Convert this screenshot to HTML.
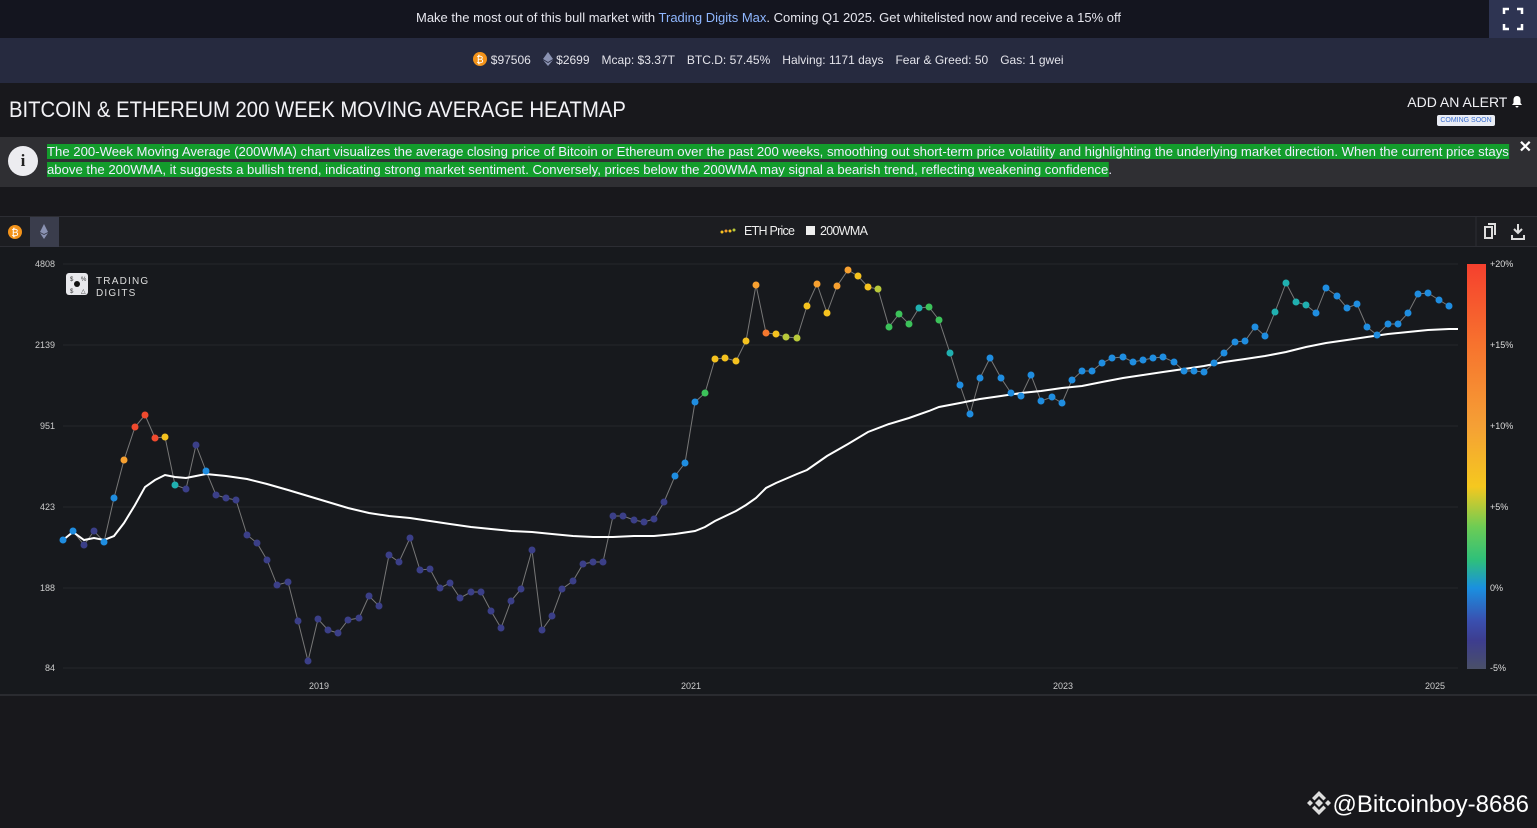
<!DOCTYPE html><html><head><meta charset="utf-8"><style>
*{margin:0;padding:0;box-sizing:border-box}
body{width:1537px;height:828px;background:#18181c;font-family:"Liberation Sans",sans-serif;color:#e8e8ee;overflow:hidden;position:relative}
.top{position:absolute;left:0;top:0;width:1537px;height:38px;background:#14151f;font-size:13px;text-align:center;line-height:36px;color:#e6e6ee}
.top b{font-weight:normal;color:#8fb7ff}
.fs{position:absolute;right:0;top:0;width:48px;height:38px;background:#2e3452}
.stats{position:absolute;left:0;top:38px;width:1537px;height:45px;background:#262a3f;font-size:12px;line-height:44px;text-align:center;color:#e3e3ea}
.stats span{margin:0 6px}
h1{position:absolute;left:9px;top:97px;font-weight:normal;font-size:22px;color:#f2f2f6;white-space:nowrap;transform:scaleX(.922);transform-origin:0 0}
.alert{position:absolute;right:14px;top:94px;font-size:14px;color:#f0f0f4}
.soon{position:absolute;left:1437px;top:115px;width:58px;height:11px;background:#e9ecf4;border-radius:2px;font-size:7px;color:#3b6fd0;text-align:center;line-height:11px}
.info{position:absolute;left:0;top:137px;width:1537px;height:50px;background:#2f2f33}
.info .i{position:absolute;left:8px;top:9px;width:30px;height:30px;border-radius:50%;background:#ececf0;color:#222;font:bold 17px "Liberation Serif",serif;text-align:center;line-height:30px}
.info p{position:absolute;left:47px;top:6px;font-size:13.2px;line-height:18px;color:#eef;white-space:nowrap;transform:scaleX(.996);transform-origin:0 0}
.info p span{background:#139c2c}
.info .x{position:absolute;right:5px;top:0;font-size:16px;font-weight:bold;color:#fff}
.tb{position:absolute;left:0;top:216px;width:1537px;height:31px;background:#1c1d21;border-top:1px solid #2c2d33;border-bottom:1px solid #2c2d33}
.chart{position:absolute;left:0;top:247px;width:1537px;height:449px;background:#17191d;border-bottom:2px solid #2a2b30}
.wm{position:absolute;right:8px;top:790px;font-family:"Liberation Sans",sans-serif;font-size:24px;color:#fff}
</style></head><body>
<div class="top">Make the most out of this bull market with <b>Trading Digits Max</b>. Coming Q1 2025. Get whitelisted now and receive a 15% off</div>
<div class="fs"><svg width="48" height="38"><g stroke="#fff" stroke-width="2.5" fill="none"><path d="M15 14v-5h5M28 9h5v5M33 24v5h-5M20 29h-5v-5"/></g></svg></div>
<div class="stats"><span><svg width="14" height="14" style="vertical-align:-2px"><circle cx="7" cy="7" r="7" fill="#f3931a"/><text x="7" y="11" font-size="10" fill="#fff" text-anchor="middle" font-family="Liberation Sans">₿</text></svg> $97506</span><span><svg width="10" height="14" style="vertical-align:-2px"><path d="M5 0L0 7l5 3 5-3z M5 11L0 8l5 6 5-6z" fill="#8a92b2"/></svg> $2699</span><span>Mcap: $3.37T</span><span>BTC.D: 57.45%</span><span>Halving: 1171 days</span><span>Fear &amp; Greed: 50</span><span>Gas: 1 gwei</span></div>
<h1>BITCOIN &amp; ETHEREUM 200 WEEK MOVING AVERAGE HEATMAP</h1>
<div class="alert">ADD AN ALERT <svg width="12" height="13" style="vertical-align:-1px"><path d="M6 1C3.5 1 2.5 3 2.5 5v3L1 10h10L9.5 8V5C9.5 3 8.5 1 6 1zM4.5 11a1.5 1.5 0 003 0z" fill="#fff"/></svg></div>
<div class="soon">COMING SOON</div>
<div class="info"><div class="i">i</div><p><span>The 200-Week Moving Average (200WMA) chart visualizes the average closing price of Bitcoin or Ethereum over the past 200 weeks, smoothing out short-term price volatility and highlighting the underlying market direction. When the current price stays</span><br><span>above the 200WMA, it suggests a bullish trend, indicating strong market sentiment. Conversely, prices below the 200WMA may signal a bearish trend, reflecting weakening confidence</span>.</p><div class="x">✕</div></div>
<div class="tb">
<svg width="1537" height="30" style="position:absolute;left:0;top:0">
<circle cx="15" cy="15" r="7" fill="#f3931a"/><text x="15" y="19" font-size="10" fill="#fff" text-anchor="middle" font-family="Liberation Sans">₿</text>
<rect x="30" y="0" width="29" height="30" fill="#3a3d4c"/><path d="M44 7l-4 8 4 2 4-2z M44 18l-4-2 4 6 4-6z" fill="#8a92b2"/>
<g fill="#f5c21f"><circle cx="722" cy="15" r="1.5"/><circle cx="726" cy="14" r="1.5" fill="#f7a030"/><circle cx="730" cy="14" r="1.5"/><circle cx="734" cy="13" r="1.5" fill="#b8c93a"/></g>
<text x="744" y="18" font-size="12.5" fill="#eee" font-family="Liberation Sans,sans-serif" textLength="51">ETH Price</text>
<rect x="806" y="9" width="9" height="9" fill="#eee"/>
<text x="820" y="18" font-size="12.5" fill="#eee" font-family="Liberation Sans,sans-serif" textLength="48">200WMA</text>
<line x1="1476" y1="0" x2="1476" y2="30" stroke="#2c2d33"/>
<path d="M1485 10h7v11h-7z M1488 7h7v11" fill="none" stroke="#ddd" stroke-width="2"/>
<path d="M1518 7v9M1514 12l4 4 4-4M1512 18v4h12v-4" fill="none" stroke="#ddd" stroke-width="2"/>
</svg></div>
<div class="chart">
<svg width="1537" height="449" style="position:absolute;left:0;top:0" font-family="Liberation Sans,sans-serif">
<defs><linearGradient id="g" x1="0" y1="0" x2="0" y2="1">
<stop offset="0" stop-color="#f5402e"/><stop offset=".2" stop-color="#f7732e"/><stop offset=".4" stop-color="#f5a035"/><stop offset=".55" stop-color="#f5c81f"/><stop offset=".65" stop-color="#6ccc55"/><stop offset=".73" stop-color="#2fc07a"/><stop offset=".8" stop-color="#1a90e0"/><stop offset=".88" stop-color="#3a50b0"/><stop offset=".93" stop-color="#3d3d8f"/><stop offset="1" stop-color="#4a5068"/></linearGradient></defs>
<g stroke="#25272c" stroke-width="1"><line x1="63" y1="17" x2="1458" y2="17"/><line x1="63" y1="98" x2="1458" y2="98"/><line x1="63" y1="179" x2="1458" y2="179"/><line x1="63" y1="260" x2="1458" y2="260"/><line x1="63" y1="341" x2="1458" y2="341"/><line x1="63" y1="421" x2="1458" y2="421"/></g>
<g font-size="9" fill="#ccc" text-anchor="end"><text x="55" y="20">4808</text><text x="55" y="101">2139</text><text x="55" y="182">951</text><text x="55" y="263">423</text><text x="55" y="344">188</text><text x="55" y="424">84</text></g>
<g font-size="9" fill="#ccc" text-anchor="middle"><text x="319" y="442">2019</text><text x="691" y="442">2021</text><text x="1063" y="442">2023</text><text x="1435" y="442">2025</text></g>
<rect x="1467" y="17" width="19" height="405" fill="url(#g)"/>
<g font-size="9" fill="#ddd"><text x="1490" y="20">+20%</text><text x="1490" y="101">+15%</text><text x="1490" y="182">+10%</text><text x="1490" y="263">+5%</text><text x="1490" y="344">0%</text><text x="1490" y="424">-5%</text></g>
<rect x="66" y="26" width="22" height="22" rx="3" fill="#e8e8ec"/><circle cx="77" cy="37" r="3" fill="#111"/><text x="70" y="34" font-size="6" fill="#333">$</text><text x="81" y="34" font-size="6" fill="#333">%</text><text x="70" y="46" font-size="6" fill="#333">$</text><text x="81" y="46" font-size="6" fill="#333">△</text>
<text x="96" y="37" font-size="10" fill="#ddd" letter-spacing="1.2">TRADING</text><text x="96" y="49" font-size="10" fill="#ddd" letter-spacing="1.2">DIGITS</text>
<g transform="translate(0,-247)">
<polyline fill="none" stroke="#777" stroke-width="1" points="63,540 73,531 84,545 94,531 104,542 114,498 124,460 135,427 145,415 155,438 165,437 175,485 186,489 196,445 206,471 216,495 226,498 236,500 247,535 257,543 267,560 277,585 288,582 298,621 308,661 318,619 328,630 338,633 348,620 359,618 369,596 379,606 389,555 399,562 410,538 420,570 430,569 440,588 450,583 460,598 471,592 481,592 491,611 501,628 511,601 521,589 532,550 542,630 552,616 562,589 573,581 583,564 593,562 603,562 613,516 623,516 634,520 644,522 654,519 664,502 675,476 685,463 695,402 705,393 715,359 725,358 736,361 746,341 756,285 766,333 776,334 786,337 797,338 807,306 817,284 827,313 837,286 848,270 858,276 868,287 878,289 889,327 899,314 909,324 919,308 929,307 939,320 950,353 960,385 970,414 980,378 990,358 1001,378 1011,393 1021,396 1031,375 1041,401 1052,397 1062,403 1072,380 1082,371 1092,371 1102,363 1112,358 1123,357 1133,362 1143,360 1153,358 1163,357 1174,362 1184,371 1194,371 1204,372 1214,363 1224,353 1235,342 1245,341 1255,327 1265,336 1275,312 1286,283 1296,302 1306,305 1316,313 1326,288 1337,296 1347,308 1357,304 1367,327 1377,335 1388,324 1398,324 1408,313 1418,294 1428,293 1439,300 1449,306"/>
<polyline fill="none" stroke="#fff" stroke-width="2" points="63,540 73,532 84,540 94,538 104,540 114,536 124,523 135,505 145,487 155,480 165,475 175,477 186,478 196,476 206,474 226,476 247,479 267,484 288,490 308,496 328,502 348,508 369,513 389,516 410,518 430,521 450,524 471,527 491,529 511,531 532,532 552,534 573,536 593,537 613,537 634,536 654,536 675,534 695,531 705,527 715,521 736,511 746,505 756,498 766,488 776,483 797,474 807,470 817,463 827,456 848,444 868,432 889,424 909,418 929,411 939,407 960,403 980,399 1001,396 1021,393 1041,391 1062,388 1082,386 1102,382 1123,378 1143,375 1163,372 1184,369 1204,366 1224,362 1245,359 1265,356 1286,352 1306,347 1326,343 1347,340 1367,337 1388,334 1408,332 1428,330 1449,329 1458,329"/>
<g fill="#3b3f88">
<circle cx="84" cy="545" r="3.5"/><circle cx="94" cy="531" r="3.5"/><circle cx="186" cy="489" r="3.5"/><circle cx="196" cy="445" r="3.5"/><circle cx="216" cy="495" r="3.5"/><circle cx="226" cy="498" r="3.5"/><circle cx="236" cy="500" r="3.5"/><circle cx="247" cy="535" r="3.5"/><circle cx="257" cy="543" r="3.5"/><circle cx="267" cy="560" r="3.5"/><circle cx="277" cy="585" r="3.5"/><circle cx="288" cy="582" r="3.5"/><circle cx="298" cy="621" r="3.5"/><circle cx="308" cy="661" r="3.5"/><circle cx="318" cy="619" r="3.5"/><circle cx="328" cy="630" r="3.5"/><circle cx="338" cy="633" r="3.5"/><circle cx="348" cy="620" r="3.5"/><circle cx="359" cy="618" r="3.5"/><circle cx="369" cy="596" r="3.5"/><circle cx="379" cy="606" r="3.5"/><circle cx="389" cy="555" r="3.5"/><circle cx="399" cy="562" r="3.5"/><circle cx="410" cy="538" r="3.5"/><circle cx="420" cy="570" r="3.5"/><circle cx="430" cy="569" r="3.5"/><circle cx="440" cy="588" r="3.5"/><circle cx="450" cy="583" r="3.5"/><circle cx="460" cy="598" r="3.5"/><circle cx="471" cy="592" r="3.5"/><circle cx="481" cy="592" r="3.5"/><circle cx="491" cy="611" r="3.5"/><circle cx="501" cy="628" r="3.5"/><circle cx="511" cy="601" r="3.5"/><circle cx="521" cy="589" r="3.5"/><circle cx="532" cy="550" r="3.5"/><circle cx="542" cy="630" r="3.5"/><circle cx="552" cy="616" r="3.5"/><circle cx="562" cy="589" r="3.5"/><circle cx="573" cy="581" r="3.5"/><circle cx="583" cy="564" r="3.5"/><circle cx="593" cy="562" r="3.5"/><circle cx="603" cy="562" r="3.5"/><circle cx="613" cy="516" r="3.5"/><circle cx="623" cy="516" r="3.5"/><circle cx="634" cy="520" r="3.5"/><circle cx="644" cy="522" r="3.5"/><circle cx="654" cy="519" r="3.5"/><circle cx="664" cy="502" r="3.5"/></g>
<g fill="#1f8de0">
<circle cx="63" cy="540" r="3.5"/><circle cx="73" cy="531" r="3.5"/><circle cx="104" cy="542" r="3.5"/><circle cx="114" cy="498" r="3.5"/><circle cx="206" cy="471" r="3.5"/><circle cx="675" cy="476" r="3.5"/><circle cx="685" cy="463" r="3.5"/><circle cx="695" cy="402" r="3.5"/><circle cx="960" cy="385" r="3.5"/><circle cx="970" cy="414" r="3.5"/><circle cx="980" cy="378" r="3.5"/><circle cx="990" cy="358" r="3.5"/><circle cx="1001" cy="378" r="3.5"/><circle cx="1011" cy="393" r="3.5"/><circle cx="1021" cy="396" r="3.5"/><circle cx="1031" cy="375" r="3.5"/><circle cx="1041" cy="401" r="3.5"/><circle cx="1052" cy="397" r="3.5"/><circle cx="1062" cy="403" r="3.5"/><circle cx="1072" cy="380" r="3.5"/><circle cx="1082" cy="371" r="3.5"/><circle cx="1092" cy="371" r="3.5"/><circle cx="1102" cy="363" r="3.5"/><circle cx="1112" cy="358" r="3.5"/><circle cx="1123" cy="357" r="3.5"/><circle cx="1133" cy="362" r="3.5"/><circle cx="1143" cy="360" r="3.5"/><circle cx="1153" cy="358" r="3.5"/><circle cx="1163" cy="357" r="3.5"/><circle cx="1174" cy="362" r="3.5"/><circle cx="1184" cy="371" r="3.5"/><circle cx="1194" cy="371" r="3.5"/><circle cx="1204" cy="372" r="3.5"/><circle cx="1214" cy="363" r="3.5"/><circle cx="1224" cy="353" r="3.5"/><circle cx="1235" cy="342" r="3.5"/><circle cx="1245" cy="341" r="3.5"/><circle cx="1255" cy="327" r="3.5"/><circle cx="1265" cy="336" r="3.5"/><circle cx="1316" cy="313" r="3.5"/><circle cx="1326" cy="288" r="3.5"/><circle cx="1337" cy="296" r="3.5"/><circle cx="1347" cy="308" r="3.5"/><circle cx="1357" cy="304" r="3.5"/><circle cx="1367" cy="327" r="3.5"/><circle cx="1377" cy="335" r="3.5"/><circle cx="1388" cy="324" r="3.5"/><circle cx="1398" cy="324" r="3.5"/><circle cx="1408" cy="313" r="3.5"/><circle cx="1418" cy="294" r="3.5"/><circle cx="1428" cy="293" r="3.5"/><circle cx="1439" cy="300" r="3.5"/><circle cx="1449" cy="306" r="3.5"/></g>
<g fill="#20b0b0"><circle cx="175" cy="485" r="3.5"/><circle cx="950" cy="353" r="3.5"/><circle cx="1275" cy="312" r="3.5"/><circle cx="1286" cy="283" r="3.5"/><circle cx="1296" cy="302" r="3.5"/><circle cx="1306" cy="305" r="3.5"/><circle cx="919" cy="308" r="3.5"/></g>
<g fill="#3cc25a"><circle cx="705" cy="393" r="3.5"/><circle cx="889" cy="327" r="3.5"/><circle cx="899" cy="314" r="3.5"/><circle cx="909" cy="324" r="3.5"/><circle cx="929" cy="307" r="3.5"/><circle cx="939" cy="320" r="3.5"/></g>
<g fill="#b8c93a"><circle cx="786" cy="337" r="3.5"/><circle cx="797" cy="338" r="3.5"/><circle cx="878" cy="289" r="3.5"/></g>
<g fill="#f5c21f"><circle cx="165" cy="437" r="3.5"/><circle cx="715" cy="359" r="3.5"/><circle cx="725" cy="358" r="3.5"/><circle cx="736" cy="361" r="3.5"/><circle cx="746" cy="341" r="3.5"/><circle cx="776" cy="334" r="3.5"/><circle cx="807" cy="306" r="3.5"/><circle cx="827" cy="313" r="3.5"/><circle cx="868" cy="287" r="3.5"/><circle cx="858" cy="276" r="3.5"/></g>
<g fill="#f7a030"><circle cx="124" cy="460" r="3.5"/><circle cx="756" cy="285" r="3.5"/><circle cx="817" cy="284" r="3.5"/><circle cx="837" cy="286" r="3.5"/><circle cx="848" cy="270" r="3.5"/></g>
<g fill="#f04a2e"><circle cx="135" cy="427" r="3.5"/><circle cx="145" cy="415" r="3.5"/><circle cx="155" cy="438" r="3.5"/><circle cx="766" cy="333" r="3.5" fill="#f5782e"/></g>
</g>
</svg></div>
<div class="wm"><svg width="28" height="26" style="vertical-align:-4px"><g fill="#ddd"><path d="M14 9l4 4-4 4-4-4z"/><path d="M2 13l3-3 3 3-3 3z"/><path d="M20 13l3-3 3 3-3 3z"/><path d="M14 1l7 7-2.5 2.5L14 6 9.5 10.5 7 8z"/><path d="M14 25l7-7-2.5-2.5L14 20l-4.5-4.5L7 18z"/></g></svg>@Bitcoinboy-8686</div>
</body></html>
